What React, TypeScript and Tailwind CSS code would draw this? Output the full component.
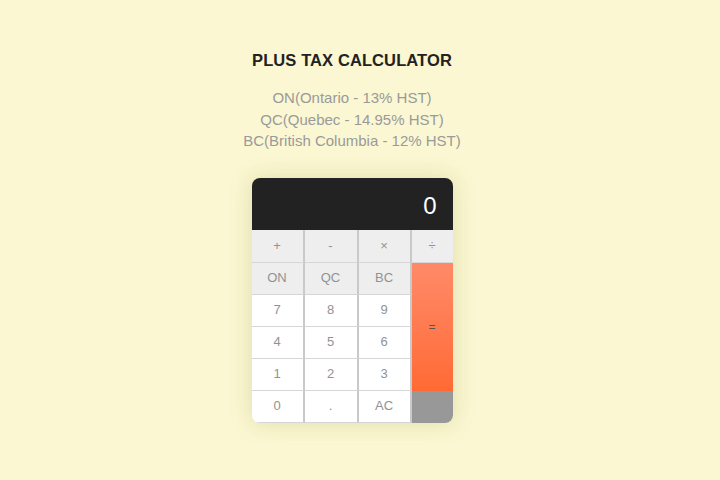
const ops = ["+", "-", "×", "÷"];

function Key({ label, gray, last, tall }: { label: string; gray?: boolean; last?: boolean; tall?: boolean }) {
  return (
    <button
      className={
        "flex items-center justify-center border-b border-[#d6d6d6] text-[13px] text-[#929292] " +
        (tall ? "h-[33px] " : "h-[32px] ") +
        (last ? "" : "border-r-2 border-r-[#c9c9c9] ") +
        (gray ? "bg-[#eeeeee]" : "bg-white")
      }
    >
      {label}
    </button>
  );
}

export default function App() {
  return (
    <div
      className="flex min-h-[480px] w-full flex-col items-center bg-[#faf7d2] pr-[16px] pt-[49px]"
      style={{ fontFamily: '"Liberation Sans", Arial, sans-serif' }}
    >
      <h1 className="text-[16.5px] font-semibold leading-[22px] tracking-[0.1px] text-[#222]">
        PLUS TAX CALCULATOR
      </h1>

      <div className="mt-[16px] text-center text-[15px] leading-[21.5px] text-[#9a9a9a]">
        <p>ON(Ontario - 13% HST)</p>
        <p>QC(Quebec - 14.95% HST)</p>
        <p>BC(British Columbia - 12% HST)</p>
      </div>

      {/* calculator */}
      <div className="mt-[26px] w-[201px] overflow-hidden rounded-[8px] shadow-[0_0_22px_rgba(140,130,30,0.22)]">
        <div className="flex h-[52px] items-center justify-end bg-[#222222] px-[16px] pt-[4px] text-[24px] text-white">
          0
        </div>

        <div className="grid grid-cols-[53px_54px_53px_41px]">
          {ops.map((o, i) => (
            <Key key={o} label={o} gray tall last={i === 3} />
          ))}
        </div>

        <div className="grid grid-cols-[160px_41px]">
          <div className="grid grid-cols-[53px_54px_53px]">
            <Key label="ON" gray />
            <Key label="QC" gray />
            <Key label="BC" gray />
            {["7", "8", "9", "4", "5", "6", "1", "2", "3", "0", ".", "AC"].map((k) => (
              <Key key={k} label={k} />
            ))}
          </div>
          <div className="flex flex-col">
            <button className="flex h-[128px] items-center justify-center bg-gradient-to-b from-[#ff8a68] to-[#ff6a33] text-[12px] text-[#555]">
              =
            </button>
            <div className="h-[32px] bg-[#989898]" />
          </div>
        </div>
      </div>
    </div>
  );
}
